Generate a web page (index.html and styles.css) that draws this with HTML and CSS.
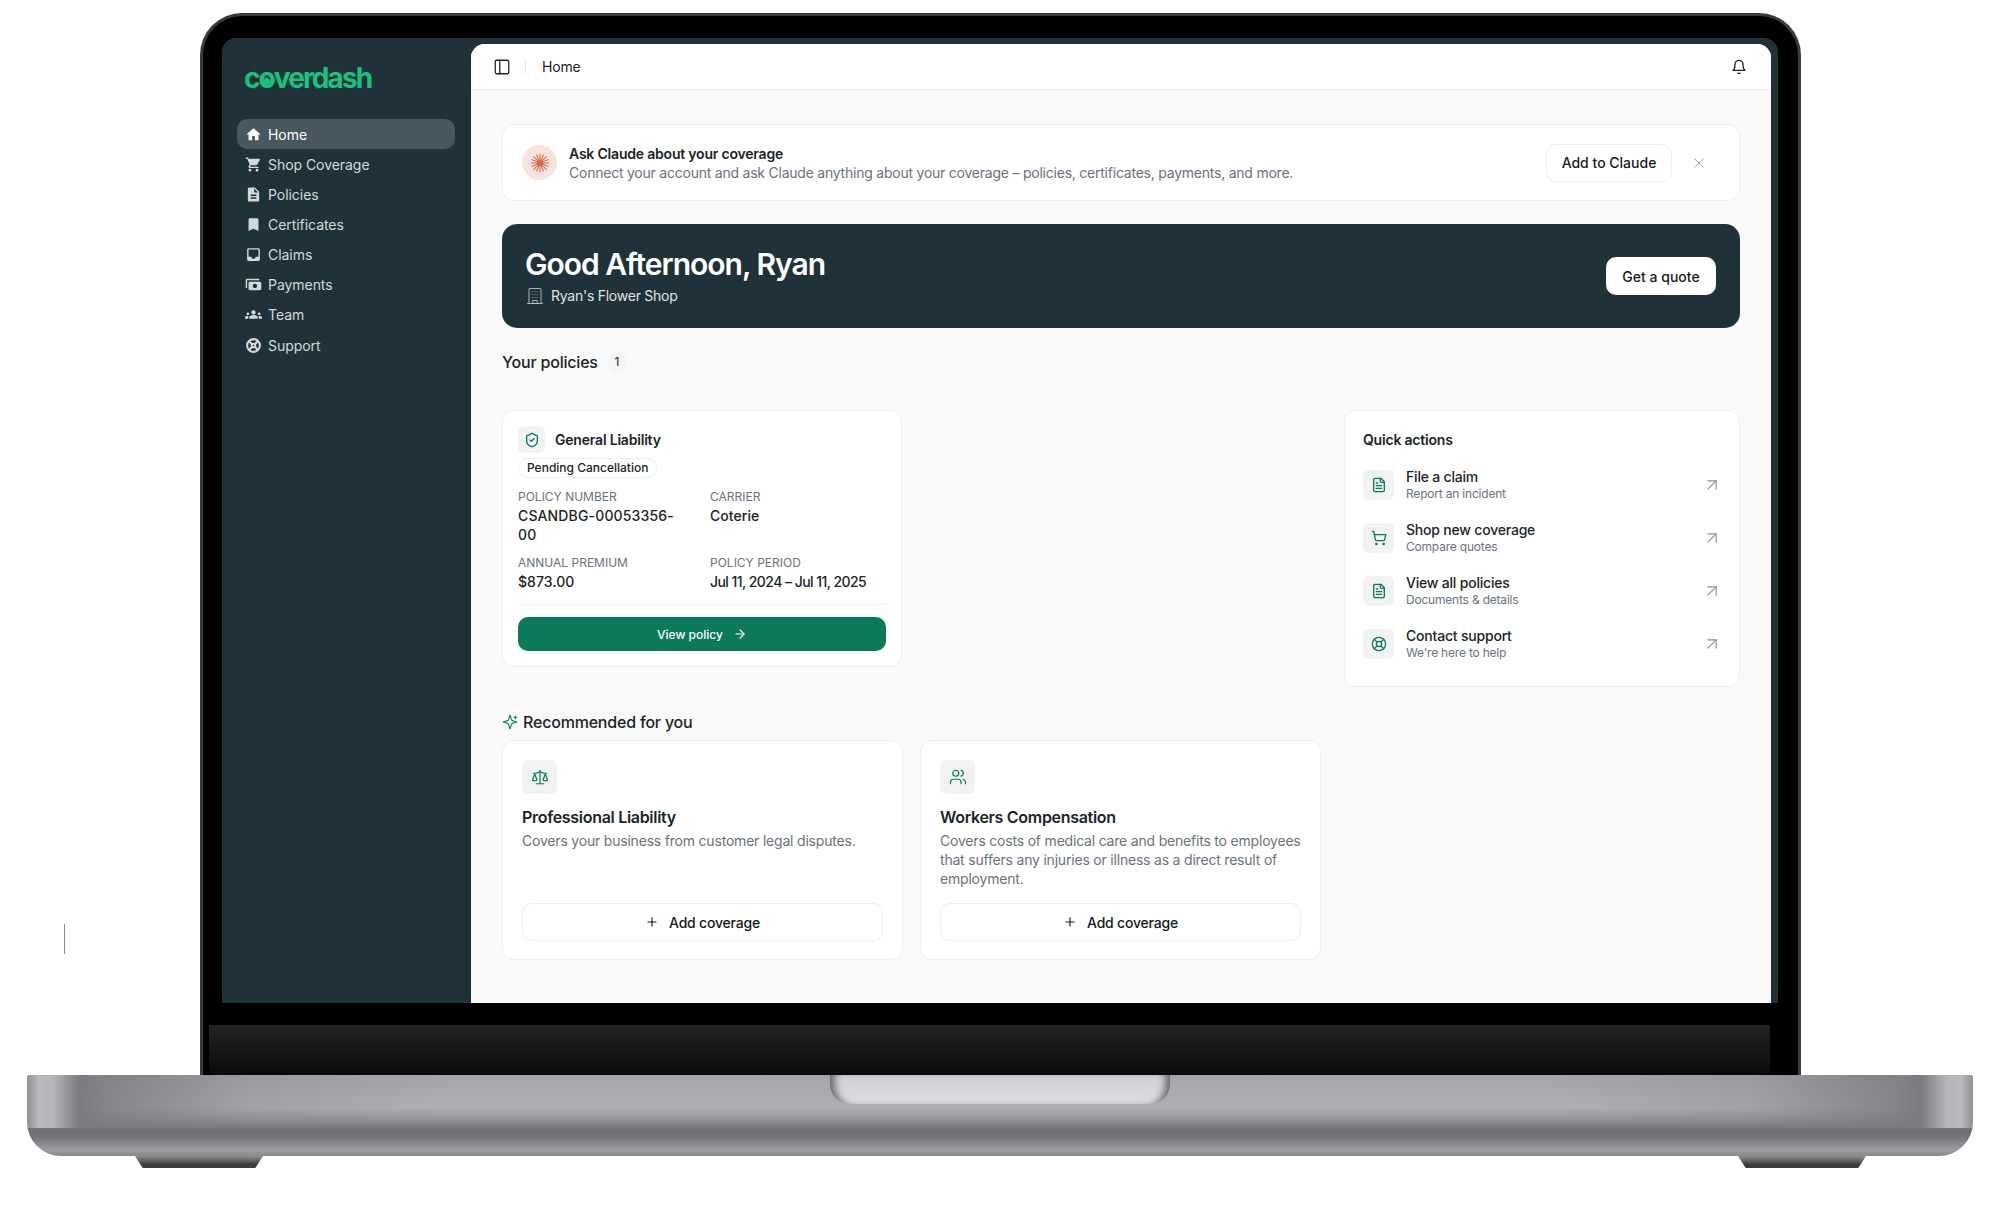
FILE: index.html
```html
<!DOCTYPE html>
<html lang="en">
<head>
<meta charset="UTF-8">
<meta name="viewport" content="width=device-width, initial-scale=1.0">
<title>Coverdash</title>
<link rel="stylesheet" href="styles.css">
</head>
<body>
  <!-- Iconos reutilizados -->
  <svg class="sprite" aria-hidden="true">
    <symbol id="i-file" viewBox="0 0 24 24"><path d="M15 2H6a2 2 0 0 0-2 2v16a2 2 0 0 0 2 2h12a2 2 0 0 0 2-2V7Z"/><path d="M14 2v4a2 2 0 0 0 2 2h4"/><path d="M10 9H8"/><path d="M16 13H8"/><path d="M16 17H8"/></symbol>
    <symbol id="i-out" viewBox="0 0 24 24"><path d="M7 7h10v10"/><path d="M7 17 17 7"/></symbol>
    <symbol id="i-plus" viewBox="0 0 24 24"><path d="M5 12h14"/><path d="M12 5v14"/></symbol>
  </svg>

  <div class="marker"></div>

  <div class="laptop">
    <div class="lid">
      <div class="screen">
        <!-- Barra lateral -->
        <aside class="sidebar">
          <div class="logo">c<span class="logo-o">o</span>verdash</div>
          <nav class="nav">
            <a class="nav-item active"><svg class="nav-icon" viewBox="0 0 24 24"><path d="M10 20v-6h4v6h5v-8h3L12 3 2 12h3v8z"/></svg>Home</a>
            <a class="nav-item"><svg class="nav-icon" viewBox="0 0 24 24"><path d="M7 18c-1.1 0-1.99.9-1.99 2S5.9 22 7 22s2-.9 2-2-.9-2-2-2zM1 2v2h2l3.6 7.59-1.35 2.45c-.16.28-.25.61-.25.96 0 1.1.9 2 2 2h12v-2H7.42c-.14 0-.25-.11-.25-.25l.03-.12.9-1.63h7.45c.75 0 1.41-.41 1.75-1.03l3.58-6.49c.08-.14.12-.31.12-.48 0-.55-.45-1-1-1H5.21l-.94-2H1zm16 16c-1.1 0-1.99.9-1.99 2s.89 2 1.99 2 2-.9 2-2-.9-2-2-2z"/></svg>Shop Coverage</a>
            <a class="nav-item"><svg class="nav-icon" viewBox="0 0 24 24"><path d="M14 2H6c-1.1 0-1.99.9-1.99 2L4 20c0 1.1.89 2 1.99 2H18c1.1 0 2-.9 2-2V8l-6-6zm2 16H8v-2h8v2zm0-4H8v-2h8v2zm-3-5V3.5L18.5 9H13z"/></svg>Policies</a>
            <a class="nav-item"><svg class="nav-icon" viewBox="0 0 24 24"><path d="M17 3H7c-1.1 0-1.99.9-1.99 2L5 21l7-3 7 3V5c0-1.1-.9-2-2-2z"/></svg>Certificates</a>
            <a class="nav-item"><svg class="nav-icon" viewBox="0 0 24 24"><path d="M19 3H4.99c-1.11 0-1.98.89-1.98 2L3 19c0 1.1.88 2 1.99 2H19c1.1 0 2-.9 2-2V5c0-1.11-.9-2-2-2zm0 12h-4c0 1.66-1.35 3-3 3s-3-1.34-3-3H4.99V5H19v10z"/></svg>Claims</a>
            <a class="nav-item"><svg class="nav-icon" viewBox="0 0 24 24"><path transform="rotate(180 12 12)" d="M19 14V6c0-1.1-.9-2-2-2H3c-1.1 0-2 .9-2 2v8c0 1.1.9 2 2 2h14c1.1 0 2-.9 2-2zm-9-1c-1.66 0-3-1.34-3-3s1.34-3 3-3 3 1.34 3 3-1.34 3-3 3zm13-6v11c0 1.1-.9 2-2 2H4v-2h17V7h2z"/></svg>Payments</a>
            <a class="nav-item"><svg class="nav-icon" viewBox="0 0 24 24"><path d="M12 12.75c1.63 0 3.07.39 4.24.9 1.08.48 1.76 1.56 1.76 2.73V18H6v-1.61c0-1.18.68-2.26 1.76-2.73 1.17-.52 2.61-.91 4.24-.91zM4 13c1.1 0 2-.9 2-2s-.9-2-2-2-2 .9-2 2 .9 2 2 2zm1.13 1.1C4.76 14.04 4.39 14 4 14c-.99 0-1.93.21-2.78.58C.48 14.9 0 15.62 0 16.43V18h4.5v-1.61c0-.83.23-1.61.63-2.29zM20 13c1.1 0 2-.9 2-2s-.9-2-2-2-2 .9-2 2 .9 2 2 2zm4 3.43c0-.81-.48-1.53-1.22-1.85C21.93 14.21 20.99 14 20 14c-.39 0-.76.04-1.13.1.4.68.63 1.46.63 2.29V18H24v-1.57zM12 6c1.66 0 3 1.34 3 3s-1.34 3-3 3-3-1.34-3-3 1.34-3 3-3z"/></svg>Team</a>
            <a class="nav-item"><svg class="nav-icon nav-icon-line" viewBox="0 0 24 24"><circle cx="12" cy="12" r="9"/><circle cx="12" cy="12" r="2.5"/><path d="m5.6 5.6 4.6 4.6M18.4 5.6l-4.6 4.6M18.4 18.4l-4.6-4.6M5.6 18.4l4.6-4.6"/></svg>Support</a>
          </nav>
        </aside>

        <!-- Contenido principal -->
        <main class="main">
          <header class="topbar">
            <svg class="icon topbar-toggle" viewBox="0 0 24 24"><rect x="3" y="3" width="18" height="18" rx="2"/><path d="M9 3v18"/></svg>
            <span class="topbar-sep"></span>
            <span class="topbar-title">Home</span>
            <svg class="icon topbar-bell" viewBox="0 0 24 24"><path d="M6 8a6 6 0 0 1 12 0c0 7 3 9 3 9H3s3-2 3-9"/><path d="M10.3 21a1.94 1.94 0 0 0 3.4 0"/></svg>
          </header>

          <div class="content">
            <div class="banner">
              <span class="claude-mark">
                <svg viewBox="0 0 24 24"><path d="M12 2v20M2 12h20M4.9 4.9l14.2 14.2M19.1 4.9 4.9 19.1M8.2 2.8l7.6 18.4M15.8 2.8 8.2 21.2M2.8 8.2l18.4 7.6M21.2 8.2 2.8 15.8"/></svg>
              </span>
              <div class="banner-text">
                <div class="banner-title">Ask Claude about your coverage</div>
                <div class="banner-sub">Connect your account and ask Claude anything about your coverage – policies, certificates, payments, and more.</div>
              </div>
              <button class="btn-outline">Add to Claude</button>
              <svg class="icon banner-close" viewBox="0 0 24 24"><path d="M18 6 6 18"/><path d="m6 6 12 12"/></svg>
            </div>

            <section class="hero">
              <div class="hero-text">
                <h1 class="hero-title">Good Afternoon, Ryan</h1>
                <div class="hero-sub">
                  <svg class="icon hero-icon" viewBox="0 0 24 24"><rect x="4" y="2" width="16" height="20" rx="1"/><path d="M2 22h20M9 22v-4h6v4M9 6h.01M15 6h.01M12 6h.01M12 10h.01M12 14h.01M15 10h.01M15 14h.01M9 10h.01M9 14h.01"/></svg>
                  Ryan's Flower Shop
                </div>
              </div>
              <button class="btn-white">Get a quote</button>
            </section>

            <div class="section-head">
              <h2 class="section-title">Your policies</h2>
              <span class="count">1</span>
            </div>

            <div class="columns">
              <div class="left-col">
                <article class="card policy">
                  <div class="policy-head">
                    <span class="tile tile-sm"><svg class="icon" viewBox="0 0 24 24"><path d="M20 13c0 5-3.5 7.5-7.66 8.95a1 1 0 0 1-.67-.01C7.5 20.5 4 18 4 13V6a1 1 0 0 1 1-1c2 0 4.5-1.2 6.24-2.72a1.17 1.17 0 0 1 1.52 0C14.51 3.81 17 5 19 5a1 1 0 0 1 1 1z"/><path d="m9 12 2 2 4-4"/></svg></span>
                    <span class="policy-name">General Liability</span>
                  </div>
                  <span class="pill">Pending Cancellation</span>
                  <div class="facts">
                    <div><div class="fact-label">Policy Number</div><div class="fact-value fact-wrap">CSANDBG-00053356-00</div></div>
                    <div><div class="fact-label">Carrier</div><div class="fact-value">Coterie</div></div>
                    <div><div class="fact-label">Annual Premium</div><div class="fact-value">$873.00</div></div>
                    <div><div class="fact-label">Policy Period</div><div class="fact-value fact-tight">Jul 11, 2024 – Jul 11, 2025</div></div>
                  </div>
                  <button class="btn-green">View policy <svg class="icon" viewBox="0 0 24 24"><path d="M5 12h14"/><path d="m12 5 7 7-7 7"/></svg></button>
                </article>

                <h2 class="section-title rec-title">
                  <svg class="icon rec-icon" viewBox="0 0 24 24"><path d="M9.937 15.5A2 2 0 0 0 8.5 14.063l-6.135-1.582a.5.5 0 0 1 0-.962L8.5 9.936A2 2 0 0 0 9.937 8.5l1.582-6.135a.5.5 0 0 1 .963 0L14.063 8.5A2 2 0 0 0 15.5 9.937l6.135 1.581a.5.5 0 0 1 0 .964L15.5 14.063a2 2 0 0 0-1.437 1.437l-1.582 6.135a.5.5 0 0 1-.963 0z"/><path d="M20 3v4"/><path d="M22 5h-4"/></svg>
                  Recommended for you
                </h2>
                <div class="rec-grid">
                  <article class="card rec">
                    <span class="tile tile-lg"><svg class="icon" viewBox="0 0 24 24"><path d="m16 16 3-8 3 8c-.87.65-1.92 1-3 1s-2.13-.35-3-1Z"/><path d="m2 16 3-8 3 8c-.87.65-1.92 1-3 1s-2.13-.35-3-1Z"/><path d="M7 21h10"/><path d="M12 3v18"/><path d="M3 7h2c2 0 5-1 7-2 2 1 5 2 7 2h2"/></svg></span>
                    <h3 class="rec-name">Professional Liability</h3>
                    <p class="rec-desc">Covers your business from customer legal disputes.</p>
                    <button class="btn-add"><svg class="icon"><use href="#i-plus"/></svg>Add coverage</button>
                  </article>
                  <article class="card rec">
                    <span class="tile tile-lg"><svg class="icon" viewBox="0 0 24 24"><path d="M16 21v-2a4 4 0 0 0-4-4H6a4 4 0 0 0-4 4v2"/><circle cx="9" cy="7" r="4"/><path d="M22 21v-2a4 4 0 0 0-3-3.87"/><path d="M16 3.13a4 4 0 0 1 0 7.75"/></svg></span>
                    <h3 class="rec-name">Workers Compensation</h3>
                    <p class="rec-desc">Covers costs of medical care and benefits to employees that suffers any injuries or illness as a direct result of employment.</p>
                    <button class="btn-add"><svg class="icon"><use href="#i-plus"/></svg>Add coverage</button>
                  </article>
                </div>
              </div>

              <aside class="card quick">
                <h3 class="quick-title">Quick actions</h3>
                <a class="quick-row">
                  <span class="tile tile-md"><svg class="icon"><use href="#i-file"/></svg></span>
                  <span class="quick-text"><span class="quick-name">File a claim</span><span class="quick-sub">Report an incident</span></span>
                  <svg class="icon quick-go"><use href="#i-out"/></svg>
                </a>
                <a class="quick-row">
                  <span class="tile tile-md"><svg class="icon" viewBox="0 0 24 24"><circle cx="8" cy="21" r="1"/><circle cx="19" cy="21" r="1"/><path d="M2.05 2.05h2l2.66 12.42a2 2 0 0 0 2 1.58h9.78a2 2 0 0 0 1.95-1.57l1.65-7.43H5.12"/></svg></span>
                  <span class="quick-text"><span class="quick-name">Shop new coverage</span><span class="quick-sub">Compare quotes</span></span>
                  <svg class="icon quick-go"><use href="#i-out"/></svg>
                </a>
                <a class="quick-row">
                  <span class="tile tile-md"><svg class="icon"><use href="#i-file"/></svg></span>
                  <span class="quick-text"><span class="quick-name">View all policies</span><span class="quick-sub">Documents &amp; details</span></span>
                  <svg class="icon quick-go"><use href="#i-out"/></svg>
                </a>
                <a class="quick-row">
                  <span class="tile tile-md"><svg class="icon" viewBox="0 0 24 24"><circle cx="12" cy="12" r="10"/><path d="m4.93 4.93 4.24 4.24"/><path d="m14.83 9.17 4.24-4.24"/><path d="m14.83 14.83 4.24 4.24"/><path d="m9.17 14.83-4.24 4.24"/><circle cx="12" cy="12" r="4"/></svg></span>
                  <span class="quick-text"><span class="quick-name">Contact support</span><span class="quick-sub">We're here to help</span></span>
                  <svg class="icon quick-go"><use href="#i-out"/></svg>
                </a>
              </aside>
            </div>
          </div>
        </main>
      </div>
      <div class="bezel"></div>
      <div class="chin"></div>
    </div>

    <div class="base"><div class="notch"></div></div>
    <div class="feet"><span class="foot"></span><span class="foot"></span></div>
  </div>
</body>
</html>
```

FILE: styles.css
```css
/* Pagina */
* {
  box-sizing: border-box;
}
html, body {
  margin: 0;
  padding: 0;
  height: 100%;
  background: #fff;
  overflow: hidden;
}
body {
  font-family: Inter, "Liberation Sans", sans-serif;
  font-size: 14px;
  letter-spacing: -0.2px;
  color: #1b2426;
}
h1, h2, h3, p {
  margin: 0;
}
button {
  font: inherit;
  letter-spacing: 0;
  cursor: pointer;
}
.sprite {
  position: absolute;
  width: 0;
  height: 0;
}
.icon {
  display: block;
  width: 16px;
  height: 16px;
  fill: none;
  stroke: currentColor;
  stroke-width: 2;
  stroke-linecap: round;
  stroke-linejoin: round;
  flex-shrink: 0;
}
.marker {
  position: absolute;
  left: 64px;
  top: 924px;
  width: 1px;
  height: 30px;
  background: #8c8c8c;
}

/* Portatil */
.laptop {
  padding-top: 13px;
}
.lid {
  width: 1601px;
  height: 1062px;
  margin-left: 200px;
  padding: 22px 20px 0 19px;
  background: #000;
  border: 3px solid #3b3b3d;
  border-bottom: 0;
  border-radius: 42px 42px 0 0;
  display: flex;
  flex-direction: column;
}
.screen {
  height: 965px;
  padding: 6px 7px 0 0;
  background: #1f3239;
  border-radius: 14px 14px 0 0;
  display: flex;
  flex-shrink: 0;
  overflow: hidden;
}
.bezel {
  height: 22px;
  flex-shrink: 0;
}
.chin {
  flex: 1;
  margin: 0 8px 0 -13px;
  background: linear-gradient(#232323, #0a0a0a);
  border-radius: 0 0 6px 6px;
}
.base {
  width: 1946px;
  height: 81px;
  margin-left: 27px;
  border-radius: 2px 2px 34px 34px;
  display: flex;
  justify-content: center;
  background-color: #8a8b90;
  background-image:
    linear-gradient(90deg, #8f9095 0, #b9bbc1 12px, #b4b6bc 26px, #7a7b80 52px, rgba(122,123,128,.8) 80px, rgba(130,131,137,.3) 220px, rgba(0,0,0,0) 420px),
    linear-gradient(270deg, #8f9095 0, #b9bbc1 12px, #b4b6bc 26px, #7a7b80 52px, rgba(122,123,128,.8) 80px, rgba(130,131,137,.3) 220px, rgba(0,0,0,0) 420px),
    linear-gradient(#a3a4a8 0, #afb0b4 40%, #9a9ba0 52%, #6f7075 68%, #76777c 78%, #9c9da1 92%, #88898d 100%);
  background-repeat: no-repeat;
  background-size: 100% 66%, 100% 66%, 100% 100%;
}
.notch {
  width: 340px;
  height: 29px;
  border-radius: 0 0 20px 20px;
  background: linear-gradient(#cfd0d4, #dcdde1);
  box-shadow: inset 10px 0 8px -6px #5a5b5f, inset -10px 0 8px -6px #5a5b5f;
}
.feet {
  display: flex;
  justify-content: space-between;
  padding: 0 134px 0 135px;
}
.foot {
  width: 128px;
  height: 12px;
  background: linear-gradient(#8f9090, #3c3c3c 70%);
  clip-path: polygon(0 0, 100% 0, 94% 100%, 6% 100%);
}

/* Barra lateral */
.sidebar {
  width: 249px;
  flex-shrink: 0;
  padding: 0 16px 0 15px;
}
.logo {
  height: 75px;
  padding: 17px 0 0 7px;
  font-size: 28px;
  font-weight: 700;
  line-height: 34px;
  letter-spacing: -1.9px;
  color: #17c37f;
}
.logo-o {
  position: relative;
}
.logo-o::after {
  content: "";
  position: absolute;
  left: 50%;
  top: 17px;
  width: 7px;
  height: 7px;
  margin-left: -3.5px;
  background: #17c37f;
  border-radius: 50% 50% 50% 0;
  transform: rotate(-45deg);
}
.nav-item {
  height: 30.15px;
  padding-left: 8px;
  border-radius: 10px;
  display: flex;
  align-items: center;
  gap: 6px;
  letter-spacing: -0.05px;
  color: #d3d9db;
}
.nav-item.active {
  background: #47585e;
  color: #fff;
}
.nav-icon {
  width: 17px;
  height: 17px;
  fill: currentColor;
  flex-shrink: 0;
}
.nav-icon-line {
  fill: none;
  stroke: currentColor;
  stroke-width: 3;
}

/* Contenido */
.main {
  width: 1300px;
  background: #f9f9f9;
  border-radius: 14px 14px 0 0;
  overflow: hidden;
}
.topbar {
  height: 46px;
  padding: 0 24px 0 22px;
  background: #fff;
  border-bottom: 1px solid #e9e9e9;
  display: flex;
  align-items: center;
}
.topbar-toggle {
  width: 18px;
  height: 18px;
  stroke-width: 1.7;
}
.topbar-sep {
  width: 1px;
  height: 14px;
  margin: 0 16px 0 14px;
  background: #e4e4e4;
}
.topbar-title {
  color: #222;
}
.topbar-bell {
  margin-left: auto;
  color: #222;
}
.content {
  padding: 34px 31px 0;
}
.banner {
  height: 77px;
  padding: 0 32px 0 19px;
  background: #fff;
  border: 1px solid #eee;
  border-radius: 12px;
  display: flex;
  align-items: center;
}
.claude-mark {
  width: 35px;
  height: 35px;
  margin-right: 12px;
  background: #f8e4de;
  border-radius: 50%;
  display: flex;
  align-items: center;
  justify-content: center;
}
.claude-mark svg {
  width: 22px;
  height: 22px;
  fill: none;
  stroke: #d9694a;
  stroke-width: 1.15;
}
.banner-text {
  flex: 1;
  line-height: 19px;
}
.banner-title {
  font-weight: 600;
}
.banner-sub {
  color: #6b7280;
  letter-spacing: -0.23px;
}
.btn-outline {
  width: 126px;
  height: 38px;
  background: #fff;
  color: #16191b;
  border: 1px solid #eceded;
  border-radius: 10px;
  font-weight: 500;
  padding: 0;
}
.banner-close {
  margin-left: 19px;
  color: #9b9ea3;
  stroke-width: 1.5;
}
.hero {
  height: 104px;
  margin-top: 23px;
  padding: 0 24px 0 23px;
  background: #1f3239;
  border-radius: 15px;
  display: flex;
  align-items: center;
  justify-content: space-between;
  color: #fff;
}
.hero-text {
  margin-top: -2px;
}
.hero-title {
  font-size: 30px;
  font-weight: 600;
  line-height: 40px;
  letter-spacing: -1px;
}
.hero-sub {
  margin-top: 1px;
  padding-left: 1px;
  display: flex;
  align-items: center;
  gap: 7px;
  line-height: 22px;
  letter-spacing: -0.25px;
  color: #dfe3e4;
}
.hero-icon {
  width: 18px;
  height: 18px;
  stroke-width: 1.2;
  color: #b9c1c4;
}
.btn-white {
  width: 110px;
  height: 38px;
  background: #fff;
  color: #16191b;
  border: 0;
  border-radius: 10px;
  font-weight: 500;
  padding: 0;
}
.section-head {
  margin-top: 23px;
  height: 22px;
  display: flex;
  align-items: center;
  gap: 9px;
}
.section-title {
  font-size: 16px;
  font-weight: 500;
  line-height: 22px;
  color: #1b2426;
}
.count {
  width: 20px;
  height: 20px;
  background: #f3f4f6;
  border-radius: 50%;
  font-size: 12px;
  line-height: 20px;
  text-align: center;
}
.columns {
  margin-top: 37px;
  display: flex;
  align-items: flex-start;
  gap: 23px;
}
.left-col {
  width: 819px;
  flex-shrink: 0;
}
.card {
  background: #fff;
  border: 1px solid #eee;
  border-radius: 12px;
}
.tile {
  background: #f0f3f2;
  border-radius: 6px;
  display: flex;
  align-items: center;
  justify-content: center;
  color: #0b7a5a;
  flex-shrink: 0;
}
.tile-sm {
  width: 27px;
  height: 27px;
}
.tile-md {
  width: 31px;
  height: 30px;
}
.tile-lg {
  width: 35px;
  height: 34px;
}

/* Poliza */
.policy {
  width: 400px;
  height: 257px;
  padding: 15px;
}
.policy-head {
  display: flex;
  align-items: center;
  gap: 10px;
}
.policy-name {
  font-weight: 600;
}
.pill {
  display: block;
  width: fit-content;
  height: 20px;
  margin-top: 5px;
  padding: 0 8px;
  border: 1px solid #eceded;
  border-radius: 10px;
  font-size: 12px;
  font-weight: 500;
  line-height: 18px;
  letter-spacing: 0;
}
.facts {
  margin-top: 9px;
  display: grid;
  grid-template-columns: 192px 1fr;
  row-gap: 9px;
  padding-bottom: 13px;
  border-bottom: 1px solid #f1f1f1;
}
.fact-label {
  font-size: 12px;
  line-height: 19px;
  letter-spacing: 0;
  text-transform: uppercase;
  color: #6b7280;
}
.fact-value {
  line-height: 19px;
  font-weight: 500;
  letter-spacing: 0.05px;
}
.fact-wrap {
  width: 165px;
  letter-spacing: 0.15px;
}
.fact-tight {
  letter-spacing: -0.55px;
}
.btn-green {
  width: 100%;
  height: 34px;
  margin-top: 12px;
  background: #0a7a5a;
  color: #fff;
  border: 0;
  border-radius: 10px;
  font-size: 12px;
  font-weight: 500;
  display: flex;
  align-items: center;
  justify-content: center;
  gap: 10px;
}
.btn-green .icon {
  width: 14px;
  height: 14px;
}

/* Recomendados */
.rec-title {
  margin-top: 44px;
  display: flex;
  align-items: center;
  gap: 5px;
}
.rec-icon {
  width: 16px;
  height: 16px;
  color: #0b7a5a;
  stroke-width: 1.6;
}
.rec-grid {
  margin-top: 7px;
  display: grid;
  grid-template-columns: 401px 401px;
  gap: 17px;
}
.rec {
  height: 220px;
  padding: 19px 19px 18px;
  display: flex;
  flex-direction: column;
}
.rec .tile .icon {
  width: 18px;
  height: 18px;
  stroke-width: 1.6;
}
.rec-name {
  margin-top: 12px;
  font-size: 16px;
  font-weight: 600;
  line-height: 22px;
  letter-spacing: -0.3px;
}
.rec-desc {
  margin-top: 3px;
  line-height: 19px;
  color: #6b7280;
}
.btn-add {
  width: 100%;
  height: 38px;
  margin-top: auto;
  background: #fff;
  color: #16191b;
  border: 1px solid #eceded;
  border-radius: 10px;
  font-weight: 500;
  letter-spacing: -0.2px;
  display: flex;
  align-items: center;
  justify-content: center;
  gap: 10px;
}
.btn-add .icon {
  width: 14px;
  height: 14px;
}

/* Acciones rapidas */
.quick {
  flex: 1;
  height: 277px;
  padding: 19px 19px 0 18px;
}
.quick-title {
  font-size: 14px;
  font-weight: 600;
  line-height: 20px;
}
.quick-row {
  height: 53px;
  display: flex;
  align-items: center;
  gap: 12px;
}
.quick-title + .quick-row {
  margin-top: 8px;
}
.quick-text {
  flex: 1;
  display: flex;
  flex-direction: column;
}
.quick-name {
  line-height: 17px;
  font-weight: 500;
}
.quick-sub {
  font-size: 12px;
  line-height: 17px;
  color: #6b7280;
}
.quick-go {
  width: 20px;
  height: 20px;
  margin-right: -2px;
  color: #8b8e94;
  stroke-width: 1.3;
}
```
